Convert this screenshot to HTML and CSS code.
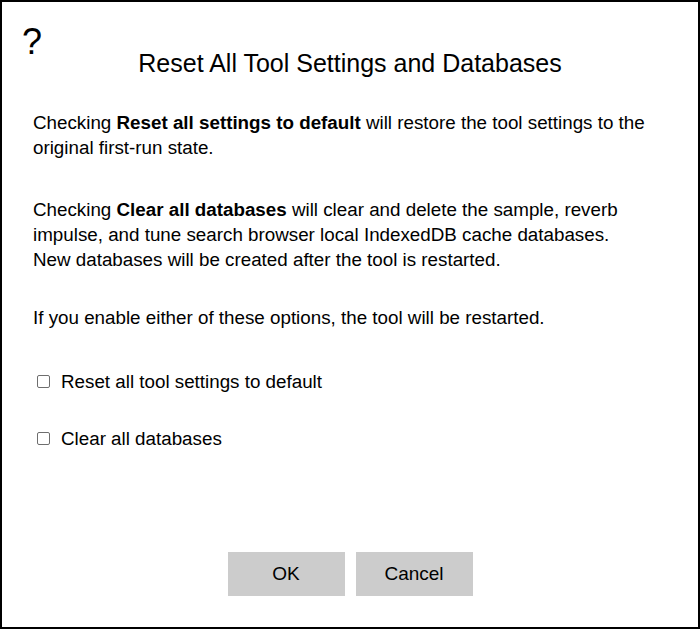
FILE: index.html
```html
<!DOCTYPE html>
<html>
<head>
<meta charset="utf-8">
<link rel="stylesheet" href="styles.css">
</head>
<body>
<div class="dialog">
  <div class="help">?</div>
  <h1 class="title">Reset All Tool Settings and Databases</h1>
  <div class="content">
    <p class="para">Checking <b>Reset all settings to default</b> will restore the tool settings to the original first-run state.</p>
    <p class="para mid">Checking <b>Clear all databases</b> will clear and delete the sample, reverb impulse, and tune search browser local IndexedDB cache databases. New databases will be created after the tool is restarted.</p>
    <p class="para last">If you enable either of these options, the tool will be restarted.</p>
    <label class="option"><span class="box"></span>Reset all tool settings to default</label>
    <label class="option"><span class="box"></span>Clear all databases</label>
  </div>
  <div class="buttons">
    <button class="btn">OK</button>
    <button class="btn">Cancel</button>
  </div>
</div>
</body>
</html>
```

FILE: styles.css
```css
html, body {
  margin: 0;
  padding: 0;
  background: #fff;
}
.dialog {
  width: 700px;
  height: 629px;
  box-sizing: border-box;
  border: 2px solid #000;
  display: flex;
  flex-direction: column;
  font-family: "Liberation Sans", Arial, sans-serif;
  color: #000;
  position: relative;
}
.help {
  position: absolute;
  left: 20px;
  top: 20px;
  font-size: 36px;
  line-height: 40px;
}
.title {
  margin: 46px 0 0 0;
  text-align: center;
  font-size: 25px;
  font-weight: normal;
  line-height: 30px;
}
.content {
  padding: 0 48px 0 31px;
  margin-top: 32px;
  font-size: 18.8px;
  line-height: 25px;
}
.para {
  margin: 0 0 37px 0;
}
.para.mid {
  margin-bottom: 33px;
}
.para.last {
  margin-bottom: 39px;
}
.option {
  display: flex;
  align-items: center;
  margin-bottom: 32px;
}
.box {
  width: 11px;
  height: 11px;
  border: 1px solid #6e6e6e;
  border-radius: 2px;
  margin: 0 11px 0 4px;
  background: #fff;
  flex: none;
}
.buttons {
  margin-top: auto;
  margin-bottom: 31px;
  display: flex;
  justify-content: center;
  gap: 11px;
}
.btn {
  width: 117px;
  height: 44px;
  background: #cccccc;
  border: none;
  font-family: "Liberation Sans", Arial, sans-serif;
  font-size: 19px;
  color: #000;
  padding: 0;
}
```
